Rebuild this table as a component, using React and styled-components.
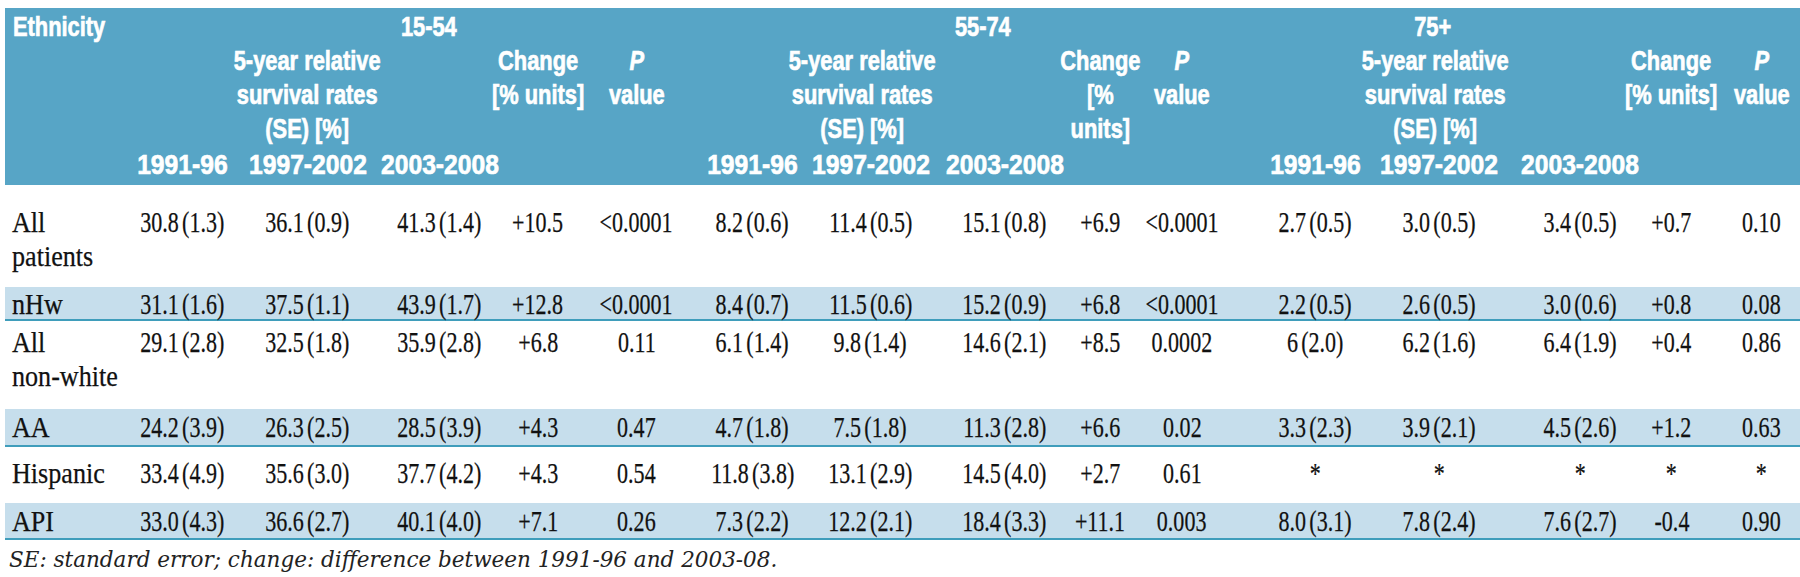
import React from "react";
import styled, { createGlobalStyle } from "styled-components";

const Global = createGlobalStyle`
  html, body { margin: 0; padding: 0; background: #ffffff; }
  body { width: 1800px; height: 577px; overflow: hidden; }
`;

/* column widths (label + 15 data columns) and the small centring shift of each column */
const COLS = [
  { w: 119 },
  { w: 121, dx: -2 },
  { w: 129, dx: -2 },
  { w: 115, dx: 8 },
  { w: 98, dx: 0 },
  { w: 107, dx: -4 },
  { w: 117, dx: 0 },
  { w: 127, dx: -4 },
  { w: 115, dx: 9 },
  { w: 88, dx: 3 },
  { w: 108, dx: -13 },
  { w: 129, dx: 2 },
  { w: 132, dx: -5 },
  { w: 116, dx: 12 },
  { w: 91, dx: 0 },
  { w: 83, dx: 3 },
];
const TEMPLATE = COLS.map((c) => `${c.w}px`).join(" ");

const Table = styled.div`
  margin: 8px 0 0 5px;
  width: 1795px;
`;

const Head = styled.div`
  display: grid;
  grid-template-columns: ${TEMPLATE};
  grid-template-rows: 34px 104px 34px;
  padding: 2px 0 3px;
  background: #57a5c6;
  color: #ffffff;
  font-family: "Liberation Sans", Arial, sans-serif;
  font-weight: 700;
  font-size: 28px;
  line-height: 34px;
  -webkit-text-stroke: 0.7px #ffffff;
`;

const HCell = styled.div`
  grid-column: ${(p) => p.$col};
  grid-row: ${(p) => p.$row};
  display: flex;
  justify-content: ${(p) => (p.$left ? "flex-start" : "center")};
  align-items: flex-start;
  padding-left: ${(p) => (p.$left ? "8px" : "0")};
  min-width: 0;
`;

const HText = styled.span`
  display: inline-block;
  white-space: nowrap;
  text-align: center;
  transform: translateX(${(p) => p.$dx || 0}px) scaleX(${(p) => p.$sx || 0.78});
  transform-origin: ${(p) => (p.$left ? "left" : "center")} top;
`;

const PItalic = styled.i`
  font-style: italic;
`;

const Row = styled.div`
  display: grid;
  grid-template-columns: ${TEMPLATE};
  box-sizing: border-box;
  height: ${(p) => p.$h}px;
  padding-top: ${(p) => p.$pt}px;
  background: ${(p) => (p.$band ? "#c6deec" : "transparent")};
  border-bottom: ${(p) => (p.$band ? "2px solid #3f9dbb" : "none")};
  font-family: "Liberation Serif", "Times New Roman", serif;
  font-size: 29px;
  line-height: 34px;
  color: #111111;
  -webkit-text-stroke: 0.25px #111111;
`;

const Label = styled.div`
  padding-left: 7px;
  white-space: nowrap;
  transform: scaleX(0.9);
  transform-origin: 7px top;
`;

const DCell = styled.div`
  display: flex;
  justify-content: center;
  align-items: flex-start;
  min-width: 0;
`;

const Num = styled.span`
  display: inline-block;
  white-space: nowrap;
  word-spacing: -3px;
  transform: translateX(${(p) => p.$dx || 0}px) scaleX(0.76);
  transform-origin: center top;
`;

const Note = styled.p`
  margin: 0;
  padding: 6px 0 0 4px;
  font-family: "DejaVu Serif", serif;
  font-style: italic;
  font-size: 21.5px;
  line-height: 28px;
  color: #222222;
  white-space: nowrap;
`;

/* labelDx: offset of the age-group title from the centre of its column */
const GROUPS = [
  { name: "15-54", start: 1, labelCol: 3, labelDx: -3, blockDx: 0, changeLines: ["Change", "[% units]"] },
  { name: "55-74", start: 6, labelCol: 8, labelDx: -13, blockDx: -8, changeLines: ["Change", "[%", "units]"] },
  { name: "75+", start: 11, labelCol: 12, labelDx: -11, blockDx: -4, changeLines: ["Change", "[% units]"] },
];

const YEARS = ["1991-96", "1997-2002", "2003-2008"];

const ROWS = [
  {
    label: ["All", "patients"], h: 102, pt: 20,
    vals: ["30.8 (1.3)", "36.1 (0.9)", "41.3 (1.4)", "+10.5", "<0.0001", "8.2 (0.6)", "11.4 (0.5)", "15.1 (0.8)", "+6.9", "<0.0001", "2.7 (0.5)", "3.0 (0.5)", "3.4 (0.5)", "+0.7", "0.10"],
  },
  {
    label: ["nHw"], band: true, h: 34, pt: 0,
    vals: ["31.1 (1.6)", "37.5 (1.1)", "43.9 (1.7)", "+12.8", "<0.0001", "8.4 (0.7)", "11.5 (0.6)", "15.2 (0.9)", "+6.8", "<0.0001", "2.2 (0.5)", "2.6 (0.5)", "3.0 (0.6)", "+0.8", "0.08"],
  },
  {
    label: ["All", "non-white"], h: 88, pt: 4,
    vals: ["29.1 (2.8)", "32.5 (1.8)", "35.9 (2.8)", "+6.8", "0.11", "6.1 (1.4)", "9.8 (1.4)", "14.6 (2.1)", "+8.5", "0.0002", "6 (2.0)", "6.2 (1.6)", "6.4 (1.9)", "+0.4", "0.86"],
  },
  {
    label: ["AA"], band: true, h: 38, pt: 1,
    vals: ["24.2 (3.9)", "26.3 (2.5)", "28.5 (3.9)", "+4.3", "0.47", "4.7 (1.8)", "7.5 (1.8)", "11.3 (2.8)", "+6.6", "0.02", "3.3 (2.3)", "3.9 (2.1)", "4.5 (2.6)", "+1.2", "0.63"],
  },
  {
    label: ["Hispanic"], h: 56, pt: 9,
    vals: ["33.4 (4.9)", "35.6 (3.0)", "37.7 (4.2)", "+4.3", "0.54", "11.8 (3.8)", "13.1 (2.9)", "14.5 (4.0)", "+2.7", "0.61", "*", "*", "*", "*", "*"],
  },
  {
    label: ["API"], band: true, h: 37, pt: 1,
    vals: ["33.0 (4.3)", "36.6 (2.7)", "40.1 (4.0)", "+7.1", "0.26", "7.3 (2.2)", "12.2 (2.1)", "18.4 (3.3)", "+11.1", "0.003", "8.0 (3.1)", "7.8 (2.4)", "7.6 (2.7)", "-0.4", "0.90"],
  },
];

const lines = (arr) =>
  arr.map((t, i) => (
    <React.Fragment key={i}>
      {i > 0 && <br />}
      {t}
    </React.Fragment>
  ));

export default function App() {
  return (
    <>
      <Global />
      <Table>
        <Head>
          <HCell $col={1} $row={1} $left>
            <HText $left>Ethnicity</HText>
          </HCell>
          {GROUPS.map((g) => {
            const c = (k) => g.start + k + 1; /* grid column number of data column k */
            return (
              <React.Fragment key={g.name}>
                <HCell $col={g.labelCol + 1} $row={1}>
                  <HText $dx={g.labelDx}>{g.name}</HText>
                </HCell>
                <HCell $col={c(1)} $row={2}>
                  <HText $dx={COLS[g.start + 1].dx + g.blockDx}>
                    {lines(["5-year relative", "survival rates", "(SE) [%]"])}
                  </HText>
                </HCell>
                <HCell $col={c(3)} $row={2}>
                  <HText $dx={COLS[g.start + 3].dx}>{lines(g.changeLines)}</HText>
                </HCell>
                <HCell $col={c(4)} $row={2}>
                  <HText $dx={COLS[g.start + 4].dx}>
                    <PItalic>P</PItalic>
                    <br />
                    value
                  </HText>
                </HCell>
                {YEARS.map((y, k) => (
                  <HCell key={y} $col={c(k)} $row={3}>
                    <HText $sx={0.88} $dx={COLS[g.start + k].dx}>{y}</HText>
                  </HCell>
                ))}
              </React.Fragment>
            );
          })}
        </Head>
        {ROWS.map((r) => (
          <Row key={r.label.join(" ")} $band={r.band} $h={r.h} $pt={r.pt}>
            <Label>{lines(r.label)}</Label>
            {r.vals.map((v, i) => (
              <DCell key={i}>
                <Num $dx={COLS[i + 1].dx}>{v}</Num>
              </DCell>
            ))}
          </Row>
        ))}
        <Note>SE: standard error; change: difference between 1991-96 and 2003-08.</Note>
      </Table>
    </>
  );
}
